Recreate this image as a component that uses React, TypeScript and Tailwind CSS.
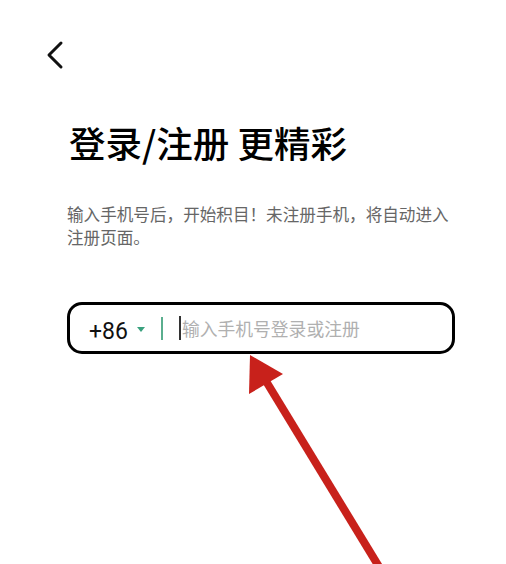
import React from "react";

export default function App() {
  return (
    <div className="relative h-[564px] w-[506px] overflow-hidden bg-white font-['Noto_Sans_CJK_SC','Noto_Sans',sans-serif]">
      <div className="pl-[44px] pt-[40px]">
        <svg width="22" height="30" viewBox="0 0 22 30" fill="none">
          <path d="M17 3 L5 15 L17 27" stroke="#111" strokeWidth="3" strokeLinecap="round" strokeLinejoin="round" />
        </svg>
      </div>

      <div className="px-[67px]">
        <h1 className="mt-[49px] pl-[2px] text-[36.5px] font-medium leading-[48px] text-black">
          登录/注册 更精彩
        </h1>
        <p className="mt-[36px] w-[392px] text-[16.6px] leading-[23px] text-[#666]">
          输入手机号后，开始积目！未注册手机，将自动进入注册页面。
        </p>

        <div className="mt-[53px] flex h-[52px] w-[388px] items-center rounded-[15px] border-[3px] border-black">
          <span className="ml-[19px] mt-[7px] font-['Roboto',sans-serif] text-[23px] leading-none text-[#111]">+86</span>
          <span className="ml-[9px] mt-[2px] h-0 w-0 border-x-[4.5px] border-t-[5px] border-x-transparent border-t-[#3aa17e]" />
          <span className="ml-[16px] h-[23px] w-[2px] bg-[#5aae8e]" />
          <span className="ml-[16px] h-[24px] w-[2px] bg-[#333]" />
          <span className="ml-[1px] text-[17.8px] text-[#b0b0b0]">输入手机号登录或注册</span>
        </div>
      </div>

      <svg className="absolute left-0 top-0" width="506" height="564" viewBox="0 0 506 564">
        <line x1="258" y1="368" x2="381" y2="570" stroke="#c8211b" strokeWidth="8" />
        <polygon points="250,355 283,374 249,394" fill="#c8211b" />
      </svg>
    </div>
  );
}
